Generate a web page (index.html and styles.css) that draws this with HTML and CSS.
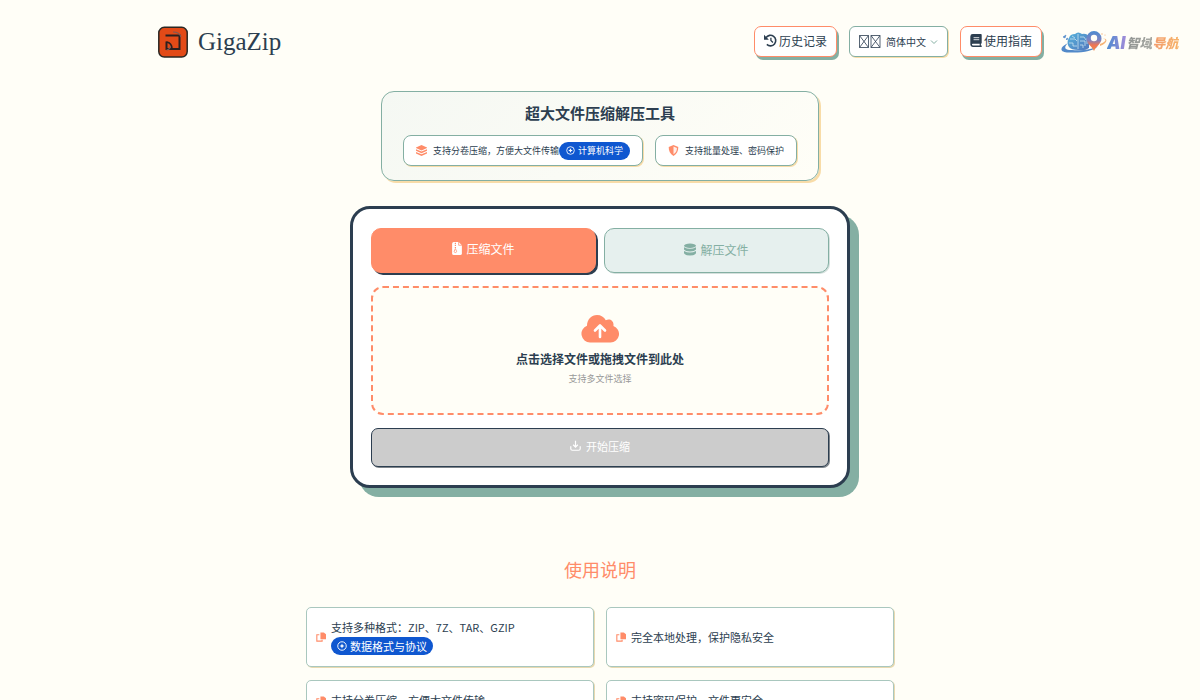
FILE: index.html
```html
<!DOCTYPE html>
<html lang="zh-CN">
<head>
  <meta charset="UTF-8" />
  <meta name="viewport" content="width=device-width, initial-scale=1.0"/>
  <title>GigaZip - 超大文件压缩解压工具</title>
  <link rel="stylesheet" href="styles.css">
</head>
<body>
  <!-- 公用图标 -->
  <svg class="sprite" aria-hidden="true">
    <symbol id="icon-copy" viewBox="0 0 18 18">
      <path d="M8 1h6l4 3v9H8z" fill="currentColor"/>
      <path d="M6 5H1.500v11.500H11V14" fill="none" stroke="currentColor" stroke-width="2"/>
    </symbol>
    <symbol id="icon-compass" viewBox="0 0 16 16">
      <circle cx="8" cy="8" r="6.800" fill="none" stroke="currentColor" stroke-width="1.500"/>
      <path d="M8 4l1.200 2.800L12 8 9.200 9.200 8 12 6.800 9.200 4 8l2.800-1.200z" fill="currentColor"/>
    </symbol>
  </svg>

  <header class="header">
    <div class="header-main">
      <a class="brand" href="#">
        <svg class="brand-logo" viewBox="0 0 30 32" aria-hidden="true">
          <rect x="0.800" y="1.300" width="28.400" height="29.800" rx="5.500" fill="#e34a17" stroke="#2b2723" stroke-width="1.500"/>
          <path d="M7.500 9.500H21.500V23H8.500V15.500" fill="none" stroke="#2b2020" stroke-width="2"/>
          <path d="M8.500 16c3.500.5 5.500 3 5.500 7" fill="none" stroke="#2b2020" stroke-width="1.600"/>
          <path d="M15 6c4 0 7 2 8 5M8.500 24c2 0 4-2 4-4" fill="none" stroke="#7c5a56" stroke-width="1.200"/>
        </svg>
        <span>GigaZip</span>
      </a>
      <nav class="nav">
        <button type="button" class="nav-btn">
          <svg width="13" height="13" viewBox="0 0 16 16" fill="none" stroke="currentColor" stroke-width="2" aria-hidden="true">
            <path d="M2.500 4.500A6.500 6.500 0 1 1 3.500 12.800"/>
            <path d="M0 1v6h6z" fill="currentColor" stroke="none"/>
            <path d="M8.500 4.500V8l2.500 2.500" stroke-width="1.600"/>
          </svg>
          历史记录
        </button>
        <div class="lang">
          <label class="lang-flag" for="lang" aria-label="语言">
            <svg width="22" height="13" viewBox="0 0 22 13" fill="none" stroke="currentColor" stroke-width="0.800" aria-hidden="true">
              <path d="M.5.500h9v12h-9zM.5.500l9 12M9.500.500l-9 12"/>
              <path d="M12 .5h9v12h-9zM12 .5l9 12M21 .5l-9 12"/>
            </svg>
          </label>
          <select id="lang">
            <option>简体中文</option>
            <option>English</option>
          </select>
          <svg class="lang-arrow" viewBox="0 0 8 8" aria-hidden="true"><path d="M1 2.500l3 3 3-3" fill="none" stroke="#84afa3"/></svg>
        </div>
        <button type="button" class="nav-btn">
          <svg width="12" height="13" viewBox="0 0 14 16" aria-hidden="true">
            <path d="M3 0h10q1 0 1 1v10q0 1-1 1v2h1v2H3q-3 0-3-3V3q0-3 3-3z" fill="currentColor"/>
            <path d="M4 4.500h7M4 7h7" stroke="#fff"/>
            <path d="M3 12h8.500v2H3q-1 0-1-1t1-1z" fill="#fff"/>
          </svg>
          使用指南
        </button>
      </nav>
    </div>
    <a class="partner" href="#">
      <svg class="partner-logo" viewBox="0 0 47 24" aria-hidden="true">
        <defs>
          <linearGradient id="brain" x1="0" y1="0" x2="1" y2="1">
            <stop offset="0" stop-color="#56b4dc"/><stop offset="1" stop-color="#5277bd"/>
          </linearGradient>
          <linearGradient id="pin" x1="0" y1="0" x2="0" y2="1">
            <stop offset="0" stop-color="#4b8bd0"/><stop offset="0.450" stop-color="#7a83c3"/>
            <stop offset="0.700" stop-color="#ef7654"/><stop offset="1" stop-color="#f28a4c"/>
          </linearGradient>
        </defs>
        <path d="M8 12C-2 17 0 22 10 21.500 22 22 34 20 38 15 31 19 20 20 12 19 5 19 3 17 8 12z" fill="#5289c9"/>
        <path d="M9 16Q6 11 9 7q1-4 6-4 3-3 7 0 5-1 7 3v11q-4 3-10 2-8 0-10-3z" fill="url(#brain)"/>
        <path d="M18 3v15M10 8h5l2 2M9 12h4v3h4M12 5l3 2M20 6h4l2 3M20 10h5v5M20 14h3v3M27 7v6" fill="none" stroke="#d8edf4" stroke-width="0.700"/>
        <path d="M34 0a7.500 7.500 0 0 0-7.500 7.500C26.500 13 32 15 34 20c2-5 7.500-7 7.500-12.500A7.500 7.500 0 0 0 34 0z" fill="url(#pin)"/>
        <circle cx="34" cy="7" r="3.200" fill="#fffef7"/>
        <path d="M40 13c6-2 7-5 3-5 5-1 5 4-3 7z" fill="#f5b274"/>
        <path d="M3 6l3-2-1 3zM6 8l2-1-1 2z" fill="#5289c9" stroke="#5289c9" stroke-width="0.600"/>
        <circle cx="42" cy="3" r="0.700" fill="#f5b274"/><circle cx="45" cy="4" r="0.600" fill="#f5b274"/>
      </svg>
      <span class="partner-ai">AI</span><span class="partner-name">智域</span><span class="partner-nav">导航</span>
    </a>
  </header>

  <main>
    <section class="banner">
      <h1>超大文件压缩解压工具</h1>
      <div class="features">
        <div class="feature">
          <svg width="11" height="11" viewBox="0 0 16 16" fill="currentColor" aria-hidden="true">
            <path d="M8 0l8 3.500v1L8 8 0 4.500v-1z"/>
            <path d="M0 6l8 3.500L16 6v2.500L8 12 0 8.500z"/>
            <path d="M0 10l8 3.500 8-3.500v2.500L8 16l-8-3.500z"/>
          </svg>
          <span class="feature-text">支持分卷压缩，方便大文件传输<a class="tag" href="#"><svg width="9" height="9" aria-hidden="true"><use href="#icon-compass"/></svg>计算机科学</a></span>
        </div>
        <div class="feature">
          <svg width="11" height="11" viewBox="0 0 16 16" aria-hidden="true">
            <path d="M8 0l7 3c0 6-2 10-7 13C3 13 1 9 1 3z" fill="currentColor"/>
            <path d="M8 2.200l5 2.200c0 4-1.500 7-5 9.200z" fill="#fff" opacity="0.850"/>
          </svg>
          <span class="feature-text">支持批量处理、密码保护</span>
        </div>
      </div>
    </section>

    <section class="card">
      <div class="tabs">
        <button type="button" class="tab active">
          <svg width="10" height="13" viewBox="0 0 12 16" aria-hidden="true">
            <path d="M2 0h6l4 4v10q0 2-2 2H2q-2 0-2-2V2q0-2 2-2z" fill="currentColor"/>
            <path d="M4 1v7" stroke="#ff8c69" stroke-width="1.500" stroke-dasharray="1.500 1"/>
            <path d="M4 8l1.500 3.500a1.500 1.500 0 1 1-3 0zM8 0v4h4" fill="none" stroke="#ff8c69" stroke-width="0.900"/>
          </svg>
          压缩文件
        </button>
        <button type="button" class="tab">
          <svg width="12" height="13" viewBox="0 0 16 16" fill="currentColor" aria-hidden="true">
            <ellipse cx="8" cy="3" rx="8" ry="3"/>
            <path d="M0 5q8 4 16 0v3q-2 2.500-8 2.500T0 8z"/>
            <path d="M0 10q8 4 16 0v3q-2 3-8 3t-8-3z"/>
          </svg>
          解压文件
        </button>
      </div>
      <label class="dropzone" for="files">
        <svg width="38" height="28" viewBox="0 0 38 28" aria-hidden="true">
          <path d="M9 27.500A8.700 8.700 0 0 1 6 10.700C6 4.500 10.500 0 16 0c4 0 7 2 8.800 5.300 4-2.300 8.500.7 7.600 5.700A8.500 8.500 0 0 1 29.500 27.500z" fill="#ff8c69"/>
          <path d="M19 22V11M14 15.500l5-5 5 5" fill="none" stroke="#fff" stroke-width="2.600" stroke-linecap="round" stroke-linejoin="round"/>
        </svg>
        <span class="drop-title">点击选择文件或拖拽文件到此处</span>
        <span class="drop-hint">支持多文件选择</span>
        <input type="file" id="files" multiple hidden>
      </label>
      <button type="button" class="start-btn" disabled>
        <svg width="11" height="11" viewBox="0 0 14 14" fill="none" stroke="currentColor" stroke-width="1.500" aria-hidden="true">
          <path d="M7 1v8M4 6l3 3 3-3M1 8v3q0 2 2 2h8q2 0 2-2V8"/>
        </svg>
        开始压缩
      </button>
    </section>

    <section class="guide">
      <h2>使用说明</h2>
      <ul class="guide-list">
        <li>
          <svg width="10" height="10" aria-hidden="true"><use href="#icon-copy"/></svg>
          <span>支持多种格式：ZIP、7Z、TAR、GZIP<br><a class="tag" href="#"><svg width="10" height="10" aria-hidden="true"><use href="#icon-compass"/></svg>数据格式与协议</a></span>
        </li>
        <li>
          <svg width="10" height="10" aria-hidden="true"><use href="#icon-copy"/></svg>
          <span>完全本地处理，保护隐私安全</span>
        </li>
        <li>
          <svg width="10" height="10" aria-hidden="true"><use href="#icon-copy"/></svg>
          <span>支持分卷压缩，方便大文件传输</span>
        </li>
        <li>
          <svg width="10" height="10" aria-hidden="true"><use href="#icon-copy"/></svg>
          <span>支持密码保护，文件更安全</span>
        </li>
      </ul>
    </section>
  </main>
</body>
</html>
```
FILE: styles.css
```css
*, *::before, *::after {
  box-sizing: border-box;
}
body {
  margin: 0;
  font-family: "Noto Sans CJK SC", sans-serif;
  background-color: #fffef7;
  color: #2c3e50;
}
button, select {
  font-family: inherit;
  color: inherit;
}
button {
  cursor: pointer;
}
a {
  text-decoration: none;
}
svg {
  flex: none;
}
.sprite {
  display: none;
}

/* 顶部导航 */
.header {
  display: grid;
  grid-template-columns: 1fr minmax(auto, 884px) 1fr;
  align-items: center;
  padding: 26px 0 0;
}
.header-main {
  grid-column: 2;
  display: flex;
  justify-content: space-between;
  align-items: flex-start;
}
.brand {
  display: flex;
  align-items: center;
  gap: 10px;
  font-family: "Liberation Serif", serif;
  font-size: 25px;
  line-height: 32px;
  color: #2c3e50;
}
.brand-logo {
  width: 30px;
  height: 32px;
}
.nav {
  display: flex;
  gap: 12px;
}
.nav-btn {
  display: flex;
  align-items: center;
  gap: 2px;
  height: 31px;
  padding: 0 9px 3px;
  border: 1px solid #ff8c69;
  border-radius: 7px;
  background: #fff;
  box-shadow: 2px 3px 0 #84afa3;
  font-size: 12px;
}
.lang {
  display: flex;
  align-items: center;
  height: 31px;
  padding: 0 9px;
  border: 1px solid #84afa3;
  border-radius: 6px;
  background: #fff;
  box-shadow: 1px 1px 0 #f8dca8;
}
.lang-flag {
  display: flex;
  margin-right: 5px;
}
.lang select {
  appearance: none;
  border: none;
  background: none;
  padding: 0;
  font-size: 10px;
}
.lang-arrow {
  width: 8px;
  height: 8px;
  margin-left: 4px;
}
.partner {
  display: flex;
  align-items: center;
  padding: 2px 0 0 18px;
  font-size: 13px;
  font-weight: 900;
  font-style: italic;
  line-height: 24px;
  white-space: nowrap;
}
.partner-logo {
  width: 47px;
  height: 24px;
}
.partner-ai, .partner-name, .partner-nav {
  color: transparent;
  background-clip: text;
}
.partner-ai {
  padding-right: 1px;
  font-family: Inter, sans-serif;
  font-size: 17px;
  background-image: linear-gradient(90deg, #4f8bd0, #a18bd8);
}
.partner-name {
  background-image: linear-gradient(90deg, #8e9290, #a7a9a3);
}
.partner-nav {
  background-image: linear-gradient(90deg, #f29a6b, #f7b36a);
}

main {
  display: flex;
  flex-direction: column;
  align-items: center;
  padding: 33px 16px 40px;
}

/* 标题横幅 */
.banner {
  padding: 9px 21px 14px;
  border: 1px solid #84afa3;
  border-radius: 13px;
  background: linear-gradient(135deg, #f5f8f3, #fffef7);
  box-shadow: 2px 2px 0 #f8dca8;
}
.banner h1 {
  margin: 0 0 10px;
  font-size: 15px;
  line-height: 24px;
  text-align: center;
}
.features {
  display: flex;
  flex-wrap: wrap;
  gap: 12px;
}
.feature {
  display: flex;
  align-items: center;
  gap: 6px;
  height: 31px;
  padding: 0 12px;
  border: 1px solid #84afa3;
  border-radius: 8px;
  background: #fff;
  box-shadow: 1px 1px 0 #f8dca8;
  color: #ff8c69;
  font-size: 9px;
}
.feature-text {
  display: flex;
  align-items: center;
  color: #2c3e50;
}
.tag {
  display: inline-flex;
  align-items: center;
  gap: 3px;
  padding: 0 6px;
  border-radius: 10px;
  background: #0f57d0;
  color: #fff;
  line-height: 18px;
}
.feature .tag {
  padding: 0 7px;
}

/* 压缩面板 */
.card {
  width: 100%;
  max-width: 500px;
  display: flex;
  flex-direction: column;
  gap: 13px;
  margin-top: 25px;
  padding: 19px 18px 18px;
  border: 3px solid #2c3e50;
  border-radius: 20px;
  background: #fff;
  box-shadow: 9px 9px 0 #84afa3;
}
.tabs {
  display: grid;
  grid-template-columns: 1fr 1fr;
  gap: 8px;
}
.tab {
  display: flex;
  justify-content: center;
  align-items: center;
  gap: 4px;
  height: 45px;
  padding: 0 6px 2px;
  border: 1px solid #84afa3;
  border-radius: 10px;
  background: #e6f0ee;
  box-shadow: 1px 1px 0 #d5e0dd;
  color: #84afa3;
  font-size: 12px;
}
.tab.active {
  padding-bottom: 5px;
  border-color: #ff8c69;
  background: #ff8c69;
  box-shadow: 2px 2px 0 #2c3e50;
  color: #fff;
}
.dropzone {
  display: flex;
  flex-direction: column;
  align-items: center;
  padding: 27px 16px 26px;
  border: 2px dashed #ff8c69;
  border-radius: 12px;
  background: #fffef7;
  cursor: pointer;
}
.drop-title {
  margin-top: 6px;
  font-size: 12px;
  font-weight: 700;
  line-height: 20px;
}
.drop-hint {
  margin-top: 2px;
  font-size: 9px;
  line-height: 16px;
  color: #999;
}
.start-btn {
  display: flex;
  justify-content: center;
  align-items: center;
  gap: 5px;
  height: 39px;
  padding: 0 6px 4px;
  border: 1px solid #2c3e50;
  border-radius: 7px;
  background: #ccc;
  box-shadow: 1px 1px 0 #7f858b;
  color: #fff;
  font-size: 11px;
  cursor: not-allowed;
}

/* 使用说明 */
.guide {
  width: 100%;
  max-width: 588px;
  margin-top: 67px;
}
.guide h2 {
  margin: 0 0 24px;
  color: #ff8c69;
  font-size: 18px;
  font-weight: 400;
  line-height: 28px;
  text-align: center;
}
.guide-list {
  display: grid;
  grid-template-columns: 1fr 1fr;
  gap: 13px 12px;
  margin: 0;
  padding: 0;
  list-style: none;
}
.guide-list li {
  display: flex;
  align-items: center;
  gap: 5px;
  padding: 10px 9px;
  border: 1px solid #a9c7be;
  border-radius: 5px;
  background: #fff;
  box-shadow: 1px 1px 0 #e8d9b0;
  color: #ff8c69;
  font-size: 11px;
  line-height: 19px;
}
.guide-list li > span {
  color: #2c3e50;
}
```
